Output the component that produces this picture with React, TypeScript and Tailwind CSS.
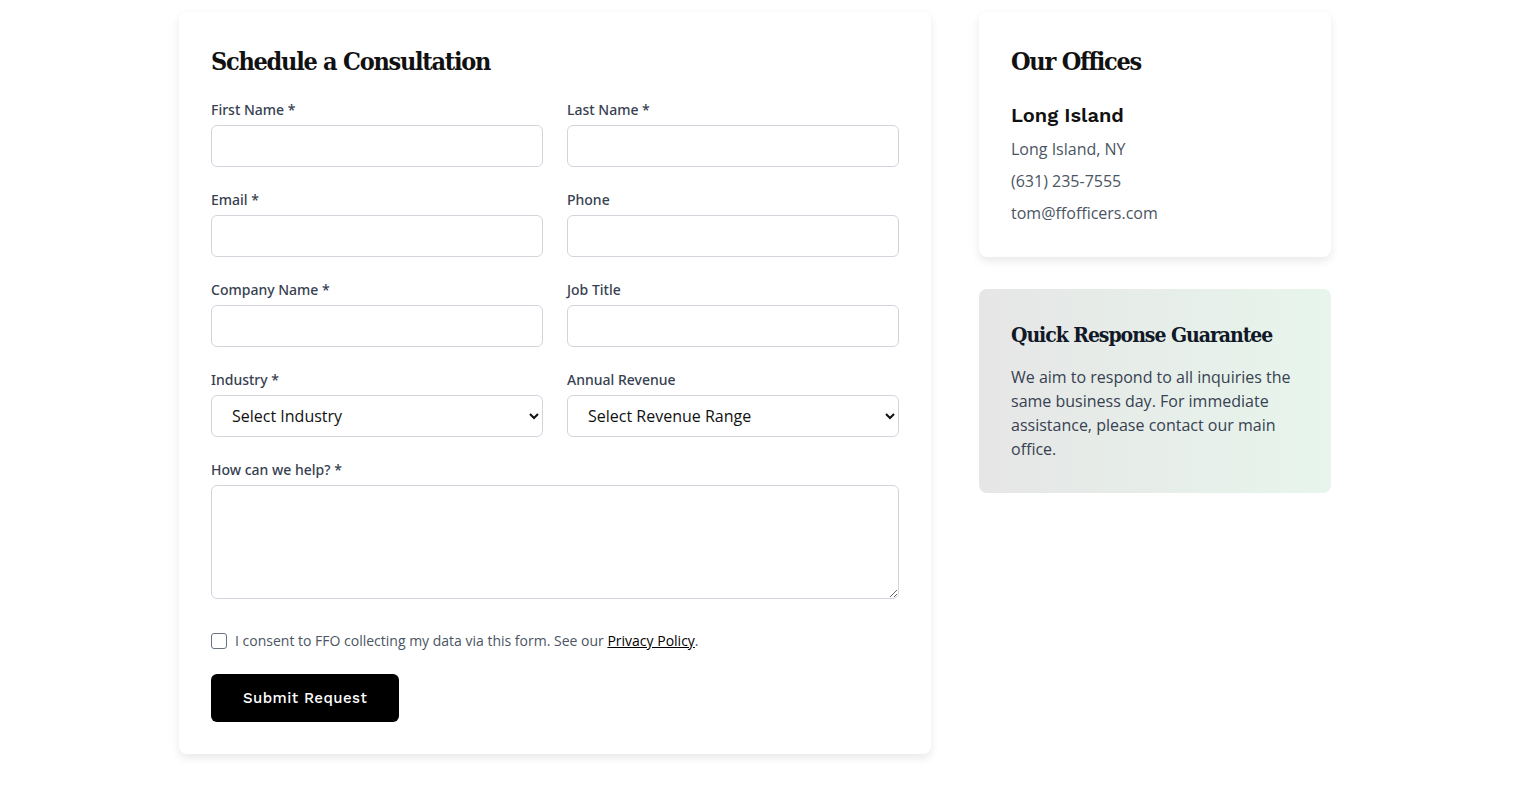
import type { ReactNode } from "react";

const serif = "font-['DejaVu_Serif',serif] font-stretch-condensed";
const sans = "font-['Open_Sans',sans-serif]";
const work = "font-['Work_Sans','Inter',sans-serif]";

function Field({ label, children }: { label: string; children: ReactNode }) {
  return (
    <div className="flex flex-col">
      <label className="mb-[5px] font-['Noto_Sans',sans-serif] text-sm leading-5 font-medium text-[#374151]">{label}</label>
      {children}
    </div>
  );
}

const inputCls = "h-[42px] w-full rounded-md border border-[#d1d5db] bg-white px-4 outline-none";
const selectCls = `${sans} h-[42px] w-full rounded-md border border-[#d1d5db] bg-white pl-4 pr-2 text-base text-[#111]`;

export default function App() {
  return (
    <div className="min-h-screen bg-white pt-[12px] pl-[179px]">
      <div className="flex items-start gap-12">
        <section className="w-[752px] rounded-lg bg-white p-8 shadow-[0_4px_10px_rgba(0,0,0,0.09)]">
          <h2 className={`${serif} mb-5 text-[25px] leading-9 font-bold tracking-[-0.05em] text-[#111]`}>Schedule a Consultation</h2>
          <form className="grid grid-cols-2 gap-x-6 gap-y-[23px]" onSubmit={(e) => e.preventDefault()}>
            <Field label="First Name *"><input className={inputCls} /></Field>
            <Field label="Last Name *"><input className={inputCls} /></Field>
            <Field label="Email *"><input className={inputCls} type="email" /></Field>
            <Field label="Phone"><input className={inputCls} /></Field>
            <Field label="Company Name *"><input className={inputCls} /></Field>
            <Field label="Job Title"><input className={inputCls} /></Field>
            <Field label="Industry *">
              <select className={selectCls} defaultValue="">
                <option value="">Select Industry</option>
              </select>
            </Field>
            <Field label="Annual Revenue">
              <select className={selectCls} defaultValue="">
                <option value="">Select Revenue Range</option>
              </select>
            </Field>
            <div className="col-span-2">
              <Field label="How can we help? *">
                <textarea className="h-[114px] w-full rounded-md border border-[#d1d5db] bg-white px-4 py-2 outline-none" />
              </Field>
            </div>
            <div className="col-span-2 mt-[9px] flex items-center gap-2">
              <input type="checkbox" className="h-4 w-4 appearance-none rounded-[3px] border border-[#6b7280] bg-white" />
              <span className={`${sans} text-sm leading-5 text-[#4b5563]`}>
                I consent to FFO collecting my data via this form. See our{" "}
                <a href="#" className="text-black underline">Privacy Policy</a>.
              </span>
            </div>
            <div className="col-span-2">
              <button className={`${work} h-12 rounded-md bg-black px-8 text-[15px] font-medium tracking-[0.03em] text-white`}>Submit Request</button>
            </div>
          </form>
        </section>

        <aside className="flex w-[352px] flex-col gap-8">
          <div className="rounded-lg bg-white p-8 shadow-[0_4px_10px_rgba(0,0,0,0.09)]">
            <h2 className={`${serif} mb-[21px] text-[25px] leading-9 font-bold tracking-[-0.05em] text-[#111]`}>Our Offices</h2>
            <h3 className={`${work} mb-2 text-xl leading-7 font-semibold text-[#111]`}>Long Island</h3>
            <div className={`${sans} flex flex-col gap-2 text-base leading-6 text-[#4b5563]`}>
              <p>Long Island, NY</p>
              <p>(631) 235-7555</p>
              <p>tom@ffofficers.com</p>
            </div>
          </div>
          <div className="rounded-lg bg-linear-to-r from-[#e6e6e6] to-[#e7f5ec] p-8">
            <h3 className={`${serif} mb-4 text-[21px] leading-7 font-bold tracking-[-0.05em] text-[#111827]`}>Quick Response Guarantee</h3>
            <p className={`${sans} text-base leading-6 text-[#374151]`}>
              We aim to respond to all inquiries the same business day. For immediate assistance, please contact our main office.
            </p>
          </div>
        </aside>
      </div>
    </div>
  );
}
